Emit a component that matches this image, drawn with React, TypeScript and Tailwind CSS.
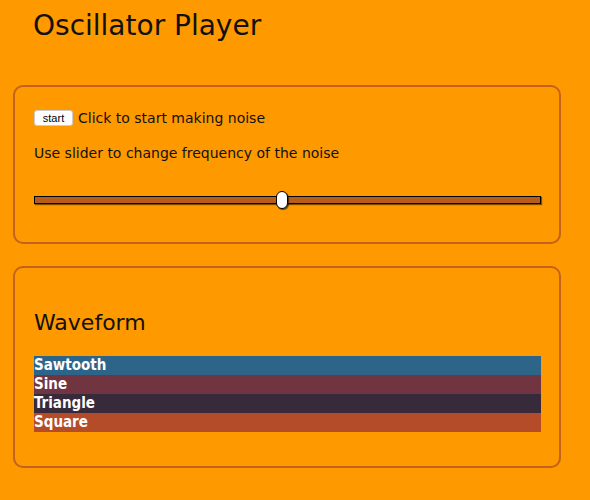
const waves = [
  { name: "Sawtooth", color: "bg-[#2d6589]" },
  { name: "Sine", color: "bg-[#703541]" },
  { name: "Triangle", color: "bg-[#372b3b]" },
  { name: "Square", color: "bg-[#b44c29]" },
];

export default function App() {
  return (
    <div className="min-h-[500px] w-[590px] bg-[#ff9900] text-[#111] font-['DejaVu_Sans',sans-serif] px-[13px] pt-[9px] pb-8">
      <h1 className="pl-[20px] text-[28px] leading-[34px] font-medium mb-[42px]">Oscillator Player</h1>

      <div className="w-[548px] h-[159px] rounded-[10px] border-2 border-[#c2621c] px-[19px] pt-[22px]">
        <div className="flex items-center gap-[5px] h-[18px]">
          <button className="h-[16px] w-[39px] bg-white rounded-[3px] border border-[#ccc] text-[11px] leading-[14px] font-['Liberation_Sans',sans-serif] text-black">
            start
          </button>
          <span className="text-[14px]">Click to start making noise</span>
        </div>
        <p className="mt-[17px] text-[14px] leading-[18px]">Use slider to change frequency of the noise</p>
        <div className="relative mt-[29px] h-[18px] w-[507px] flex items-center">
          <div className="w-full h-[8px] bg-[#b85c1a] border border-black shadow-[1px_1px_1px_rgba(0,0,0,0.5)]" />
          <div className="absolute left-[242px] top-0 w-[12px] h-[18px] rounded-full bg-white border border-black shadow-[1px_1px_1px_rgba(0,0,0,0.6)]" />
        </div>
      </div>

      <div className="mt-[22px] w-[548px] h-[202px] rounded-[10px] border-2 border-[#c2621c] px-[19px] pt-[42px]">
        <h2 className="text-[22px] leading-[26px] mb-[20px]">Waveform</h2>
        <ul className="w-[507px]">
          {waves.map((w) => (
            <li
              key={w.name}
              className={`${w.color} h-[19px] text-white text-[15px] leading-[19px] font-bold font-['DejaVu_Sans_Condensed','DejaVu_Sans',sans-serif]`}
            >
              {w.name}
            </li>
          ))}
        </ul>
      </div>
    </div>
  );
}
